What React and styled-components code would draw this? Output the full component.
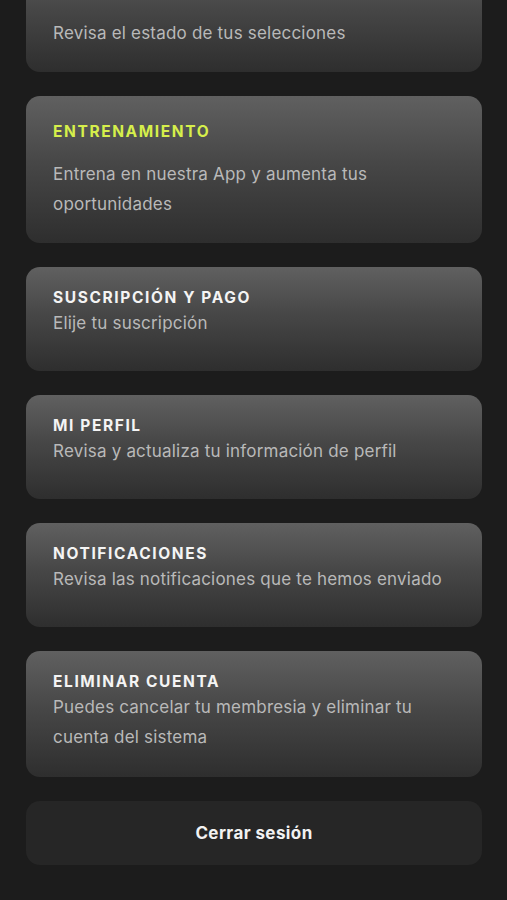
import React from 'react';
import styled, { createGlobalStyle } from 'styled-components';

const GlobalStyle = createGlobalStyle`
  html, body {
    margin: 0;
    padding: 0;
    background: #1c1c1c;
  }
  body {
    font-family: Inter, "Open Sans", "Liberation Sans", sans-serif;
    -webkit-font-smoothing: antialiased;
  }
`

const Viewport = styled.div`
  height: 900px;
  overflow: hidden;
  background: #1c1c1c;
`

// list is scrolled a bit, so the first card is partly above the top edge
const Scroller = styled.div`
  display: flex;
  flex-direction: column;
  gap: 24px;
  padding: 0 25px 0 26px;
  margin-top: -45px;
`

const Card = styled.div`
  display: flex;
  flex-direction: column;
  min-height: 104px;
  box-sizing: border-box;
  padding: ${props => props.$spaced ? '26px 27px 24px' : '21px 27px 25px'};
  border-radius: 14px;
  background: linear-gradient(180deg, #606060 0%, #474747 45%, #2e2e2e 100%);
  cursor: pointer;
`

const Title = styled.div`
  font-size: 15.5px;
  line-height: 20px;
  font-weight: 700;
  letter-spacing: 1.6px;
  color: ${props => props.$color || '#f4f4f4'};
  margin-bottom: ${props => props.$spaced ? '17px' : '0'};
`

const Description = styled.div`
  font-size: 17px;
  line-height: 30px;
  color: #b9b9b9;
  letter-spacing: 0.2px;
`

const LogoutButton = styled.div`
  height: 64px;
  border-radius: 14px;
  background: #262626;
  display: flex;
  align-items: center;
  justify-content: center;
  font-size: 17px;
  font-weight: 700;
  color: #f2f2f2;
  letter-spacing: 0.4px;
  cursor: pointer;
`

const Footer = styled.div`
  text-align: center;
  font-size: 15px;
  line-height: 20px;
  color: #8a8a8a;
  padding-top: 8px;
`

const items = [
  { title: 'MIS SELECCIONES', text: 'Revisa el estado de tus selecciones', spaced: true },
  { title: 'ENTRENAMIENTO', text: 'Entrena en nuestra App y aumenta tus oportunidades', spaced: true, accent: '#d6ef4b' },
  { title: 'SUSCRIPCIÓN Y PAGO', text: 'Elije tu suscripción' },
  { title: 'MI PERFIL', text: 'Revisa y actualiza tu información de perfil' },
  { title: 'NOTIFICACIONES', text: 'Revisa las notificaciones que te hemos enviado' },
  { title: 'ELIMINAR CUENTA', text: 'Puedes cancelar tu membresia y eliminar tu cuenta del sistema' },
]

const App = () => (
  <Viewport>
    <GlobalStyle />
    <Scroller>
      {items.map(item => (
        <Card key={item.title} $spaced={item.spaced}>
          <Title $spaced={item.spaced} $color={item.accent}>{item.title}</Title>
          <Description>{item.text}</Description>
        </Card>
      ))}
      <LogoutButton>Cerrar sesión</LogoutButton>
      <Footer>Términos y condiciones</Footer>
    </Scroller>
  </Viewport>
)

export default App;
